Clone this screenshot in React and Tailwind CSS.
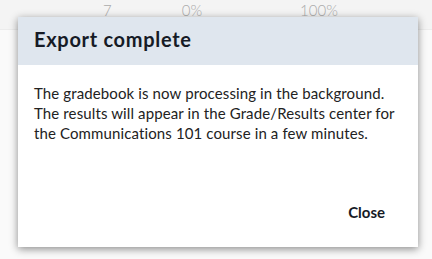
export default function App() {
  return (
    <div className="relative h-[259px] w-[432px] overflow-hidden bg-[#f8f8f8] font-['Lato',sans-serif]">
      {/* page behind the dialog */}
      <div className="flex h-[30px] items-start border-b border-[#ececec] bg-[#f4f4f4] text-[15px] font-light text-[#ababab]">
        <span className="ml-[103px] leading-[20px]">7</span>
        <span className="ml-[70px] leading-[20px]">0%</span>
        <span className="ml-[98px] leading-[20px]">100%</span>
      </div>
      <div className="h-[229px] bg-[#fafafa]" />

      {/* dialog */}
      <div className="absolute left-[18px] top-[17px] flex h-[230px] w-[400px] flex-col bg-white shadow-[0_2px_8px_rgba(0,0,0,0.45)]">
        <div className="flex h-[48px] items-center bg-[#dfe6ee] px-[16px] pb-[5px]">
          <h2 className="text-[20px] font-bold tracking-[0.7px] text-[#161b26]">Export complete</h2>
        </div>
        <p className="px-[16px] pt-[18px] text-[15px] leading-[20px] tracking-[0.12px] text-[#222]">
          The gradebook is now processing in the background. The results will appear in the Grade/Results center for the
          Communications 101 course in a few minutes.
        </p>
        <div className="mt-auto flex justify-end px-[33px] pb-[24px]">
          <button className="text-[15px] font-bold text-[#161b26]">Close</button>
        </div>
      </div>
    </div>
  );
}
